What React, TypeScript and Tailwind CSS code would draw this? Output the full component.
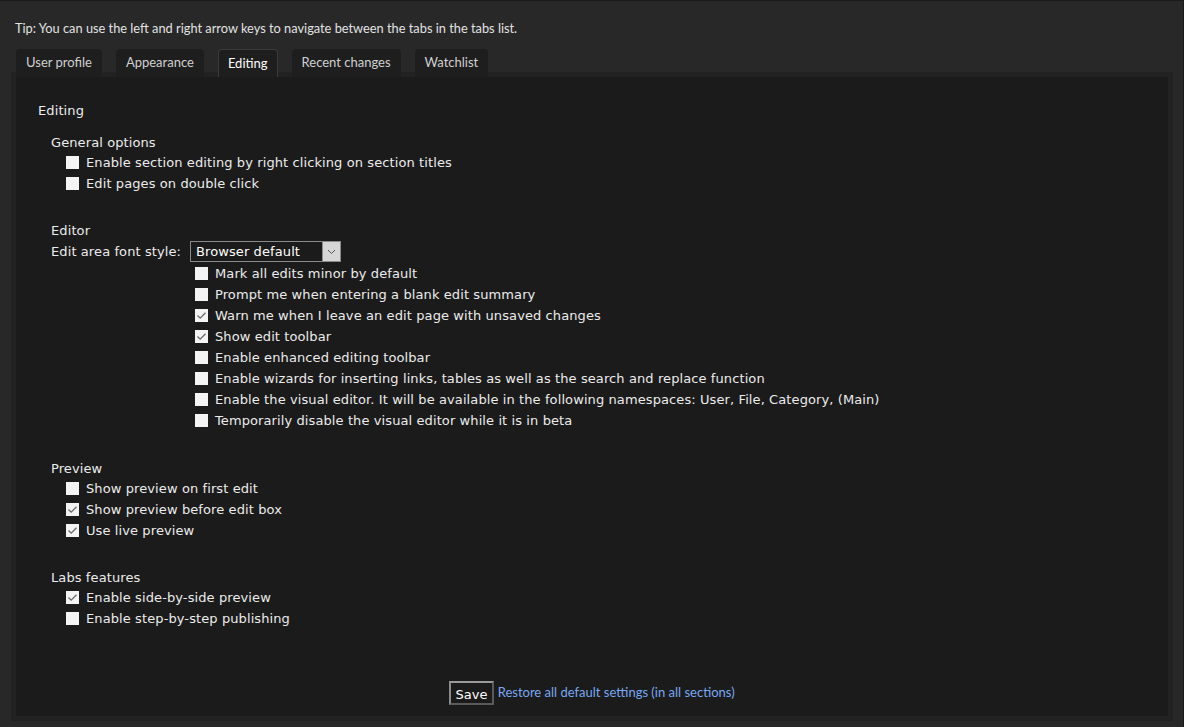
import React from "react";

const dv = { fontFamily: '"DejaVu Sans", Verdana, sans-serif' };
const lato = { fontFamily: 'Lato, "Liberation Sans", sans-serif' };

function Box({ checked }: { checked?: boolean }) {
  return (
    <span className="inline-flex h-[13px] w-[13px] shrink-0 items-center justify-center bg-[#f4f4f4]">
      {checked ? (
        <svg width="11" height="11" viewBox="0 0 11 11">
          <path d="M1.5 5.5 L4.2 8.2 L9.5 2.8" fill="none" stroke="#6a6a6a" strokeWidth="1.3" />
        </svg>
      ) : null}
    </span>
  );
}

function Row({ label, checked }: { label: string; checked?: boolean }) {
  return (
    <div className="flex h-[21px] items-center gap-[7px] pl-[15px]">
      <Box checked={checked} />
      <span>{label}</span>
    </div>
  );
}

function Heading({ children }: { children: React.ReactNode }) {
  return <div className="flex h-[19px] items-center">{children}</div>;
}

export default function App() {
  const tabs = ["User profile", "Appearance", "Editing", "Recent changes", "Watchlist"];
  return (
    <div className="min-h-[727px] w-[1184px] border-r border-t border-[#1a1a1a] bg-[#282828]">
      <div className="pl-[15px] pt-[19px] text-[12.8px] leading-[16px] text-[#e2e2e2]" style={lato}>
        Tip: You can use the left and right arrow keys to navigate between the tabs in the tabs list.
      </div>
      <div className="relative z-10 mt-[13px] flex gap-[14px] pl-[16px]" style={lato}>
        {tabs.map((t) => (
          <div
            key={t}
            className={
              t === "Editing"
                ? "flex h-[28px] items-center rounded-t-[4px] border border-b-0 border-[#3a3a3a] bg-[#1e1e1e] px-[9px] text-[13px] text-white"
                : "flex h-[28px] items-center rounded-t-[4px] bg-[#1e1e1e] px-[10px] text-[13px] text-[#d0d0d0]"
            }
          >
            {t}
          </div>
        ))}
      </div>
      <div className="ml-[11px] mt-[-5px] w-[1162px] border-[5px] border-[#222222] bg-[#1b1b1b]">
        <div className="pb-[11px] pl-[22px] pt-[24px] text-[13px] tracking-[0.1px] text-[#ececec]" style={dv}>
          <Heading>Editing</Heading>
          <div className="pl-[13px]">
            <div className="mt-[13px]">
              <Heading>General options</Heading>
              <Row label="Enable section editing by right clicking on section titles" />
              <Row label="Edit pages on double click" />
            </div>
            <div className="mt-[27px]">
              <Heading>Editor</Heading>
              <div className="flex h-[23px] items-center">
                <span className="w-[139px]">Edit area font style:</span>
                <div className="flex h-[21px] w-[151px] items-stretch border border-[#8a8a8a] bg-[#1b1b1b]">
                  <span className="flex flex-1 items-center pl-[5px] text-white">Browser default</span>
                  <span className="flex w-[18px] items-center justify-center border-l border-[#8a8a8a] bg-[#d6d6d6]">
                    <svg width="9" height="6" viewBox="0 0 9 6">
                      <path d="M1 1 L4.5 4.5 L8 1" fill="none" stroke="#555" strokeWidth="1" />
                    </svg>
                  </span>
                </div>
              </div>
              <div className="pl-[129px]">
                <Row label="Mark all edits minor by default" />
                <Row label="Prompt me when entering a blank edit summary" />
                <Row label="Warn me when I leave an edit page with unsaved changes" checked />
                <Row label="Show edit toolbar" checked />
                <Row label="Enable enhanced editing toolbar" />
                <Row label="Enable wizards for inserting links, tables as well as the search and replace function" />
                <Row label="Enable the visual editor. It will be available in the following namespaces: User, File, Category, (Main)" />
                <Row label="Temporarily disable the visual editor while it is in beta" />
              </div>
            </div>
            <div className="mt-[28px]">
              <Heading>Preview</Heading>
              <Row label="Show preview on first edit" />
              <Row label="Show preview before edit box" checked />
              <Row label="Use live preview" checked />
            </div>
            <div className="mt-[27px]">
              <Heading>Labs features</Heading>
              <Row label="Enable side-by-side preview" checked />
              <Row label="Enable step-by-step publishing" />
            </div>
          </div>
          <div className="mt-[52px] flex items-center justify-center gap-[4px] pr-[22px]">
            <button
              className="h-[24px] border-2 border-b-[#5a5a5a] border-l-[#8a8a8a] border-r-[#5a5a5a] border-t-[#9a9a9a] bg-[#1b1b1b] px-[4px] pt-[2px] text-[13px] text-white"
              style={dv}
            >
              Save
            </button>
            <span className="text-[13px] tracking-normal text-[#78a8f2]" style={lato}>
              Restore all default settings (in all sections)
            </span>
          </div>
        </div>
      </div>
    </div>
  );
}
